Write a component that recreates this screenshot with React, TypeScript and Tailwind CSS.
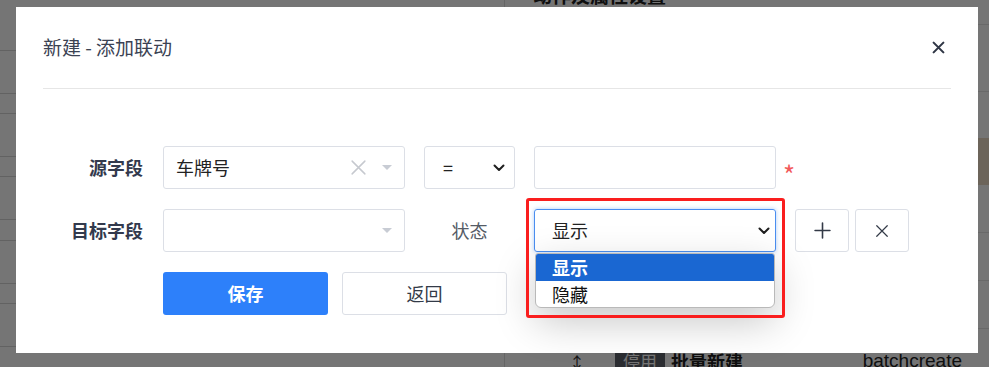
import React from "react";

const font = "font-['Noto_Sans_CJK_SC','Noto_Sans',sans-serif]";

function Chevron() {
  return (
    <svg width="12" height="8" viewBox="0 0 12 8" className="shrink-0">
      <path d="M1.5 1.5 L6 6 L10.5 1.5" fill="none" stroke="#1f1f1f" strokeWidth="2" strokeLinecap="round" strokeLinejoin="round" />
    </svg>
  );
}

function Caret() {
  return (
    <svg width="10" height="6" viewBox="0 0 10 6" className="shrink-0">
      <path d="M0 0 L10 0 L5 5 Z" fill="#c8ccd4" />
    </svg>
  );
}

function Cross({ size = 16, color = "#333", width = 1.5 }: { size?: number; color?: string; width?: number }) {
  return (
    <svg width={size} height={size} viewBox="0 0 16 16">
      <path d="M2 2 L14 14 M14 2 L2 14" stroke={color} strokeWidth={width} strokeLinecap="round" />
    </svg>
  );
}

function Plus() {
  return (
    <svg width="17" height="17" viewBox="0 0 16 16">
      <path d="M8 1 V15 M1 8 H15" stroke="#333a47" strokeWidth="1.5" strokeLinecap="round" />
    </svg>
  );
}

const leftRows = [51, 43, 20, 43, 20, 43, 21, 43, 20, 43, 40];

export default function App() {
  return (
    <div className={`relative w-[989px] h-[367px] overflow-hidden bg-white ${font}`}>
      {/* page behind the dialog */}
      <div className="flex h-full">
        <div className="w-[505px] flex flex-col border-r border-[#dcdcdc]">
          {leftRows.map((h, i) => (
            <div key={i} style={{ height: h }} className="shrink-0 border-b border-[#d6d6d6]" />
          ))}
        </div>
        <div className="flex-1 flex flex-col">
          <div className="h-[25px] shrink-0 border-b border-[#e4e4e4] pl-[28px]">
            <div className="-mt-[19px] text-[19px] font-bold text-[#222]">动作及属性设置</div>
          </div>
          <div className="h-[67px] shrink-0 border-b border-[#e4e4e4]" />
          <div className="h-[46px] shrink-0" />
          <div className="h-[47px] shrink-0 bg-[#ebd9c4]" />
          <div className="h-[48px] shrink-0 border-b border-[#e4e4e4]" />
          <div className="h-[48px] shrink-0 border-b border-[#e4e4e4]" />
          <div className="h-[48px] shrink-0 border-b border-[#e4e4e4]" />
          <div className="flex items-center h-[64px] shrink-0 pl-[64px] text-[18px] text-[#222]">
            <span className="text-[16px] text-[#333]">↕</span>
            <span className="ml-[30px] rounded-[3px] bg-[#5f626b] px-[8px] text-[17px] leading-[26px] text-white">停用</span>
            <span className="ml-[6px] font-bold">批量新建</span>
            <span className="ml-auto mr-[27px] font-['Liberation_Sans',sans-serif] text-[19px]">batchcreate</span>
          </div>
        </div>
      </div>
      <div className="absolute inset-0 bg-black/[0.54]" />

      {/* dialog */}
      <div className="absolute left-[16px] top-[7px] w-[962px] h-[346px] bg-white">
        <div className="mx-[27px] h-[82px] flex items-center justify-between border-b border-[#e6e6e6]">
          <div className="text-[19px] text-[#3b4253]">新建 - 添加联动</div>
          <div className="mr-[6px]">
            <Cross size={13} color="#2f3645" width={2.6} />
          </div>
        </div>

        <div className="mx-[27px] pt-[57px] flex flex-col gap-[20px] text-[18px]">
          {/* row 1 */}
          <div className="flex items-center h-[43px]">
            <div className="w-[100px] text-right font-bold text-[#333a4d]">源字段</div>
            <div className="ml-[20px] w-[242px] h-full flex items-center border border-[#dcdfe6] rounded-[3px] pl-[12px] pr-[12px] text-[#222]">
              <span className="flex-1">车牌号</span>
              <Cross size={17} color="#c6c9cf" width={1.4} />
              <span className="ml-[15px]"><Caret /></span>
            </div>
            <div className="ml-[19px] w-[91px] h-full flex items-center justify-between border border-[#dcdfe6] rounded-[3px] pl-[18px] pr-[9px] text-[#222]">
              <span>=</span>
              <Chevron />
            </div>
            <div className="ml-[19px] w-[242px] h-full border border-[#dcdfe6] rounded-[3px]" />
            <span className="ml-[7px] mt-[12px] text-[26px] leading-none text-[#f25a5a]">*</span>
          </div>

          {/* row 2 */}
          <div className="flex items-center h-[43px]">
            <div className="w-[100px] text-right font-bold text-[#333a4d]">目标字段</div>
            <div className="ml-[20px] w-[242px] h-full flex items-center justify-end border border-[#dcdfe6] rounded-[3px] pr-[12px]">
              <Caret />
            </div>
            <div className="w-[129px] text-center text-[#555b66]">状态</div>
            <div className="relative w-[242px] h-full">
              <div className="h-full flex items-center justify-between border border-[#4a8ef0] rounded-[3px] pl-[17px] pr-[5px] text-[#222] shadow-[0_0_4px_rgba(74,142,240,0.45)]">
                <span>显示</span>
                <Chevron />
              </div>
              <div className="absolute left-[1px] right-[1px] top-[44px] z-10 overflow-hidden rounded-b-[6px] rounded-t-[3px] border border-[#b9b9b9] bg-white shadow-[0_14px_40px_rgba(0,0,0,0.22)]">
                <div className="h-[27px] bg-[#1a67d2] pl-[16px] leading-[27px] font-bold text-white">显示</div>
                <div className="h-[26px] pl-[16px] leading-[26px] text-[#111]">隐藏</div>
              </div>
              <div className="absolute -left-[8px] -right-[9px] -top-[11px] h-[120px] z-20 rounded-[3px] border-[3px] border-[#fa1e1e]" />
            </div>
            <div className="ml-[19px] w-[54px] h-full flex items-center justify-center border border-[#dcdfe6] rounded-[3px]">
              <Plus />
            </div>
            <div className="ml-[6px] w-[54px] h-full flex items-center justify-center border border-[#dcdfe6] rounded-[3px]">
              <Cross size={14} color="#333a47" width={1.4} />
            </div>
          </div>

          {/* row 3 */}
          <div className="flex items-center h-[43px] pl-[120px]">
            <div className="w-[165px] h-full flex items-center justify-center rounded-[3px] bg-[#2d80fa] font-bold text-white">保存</div>
            <div className="ml-[14px] w-[165px] h-full flex items-center justify-center rounded-[3px] border border-[#dcdfe6] text-[#333a47]">返回</div>
          </div>
        </div>
      </div>
    </div>
  );
}
